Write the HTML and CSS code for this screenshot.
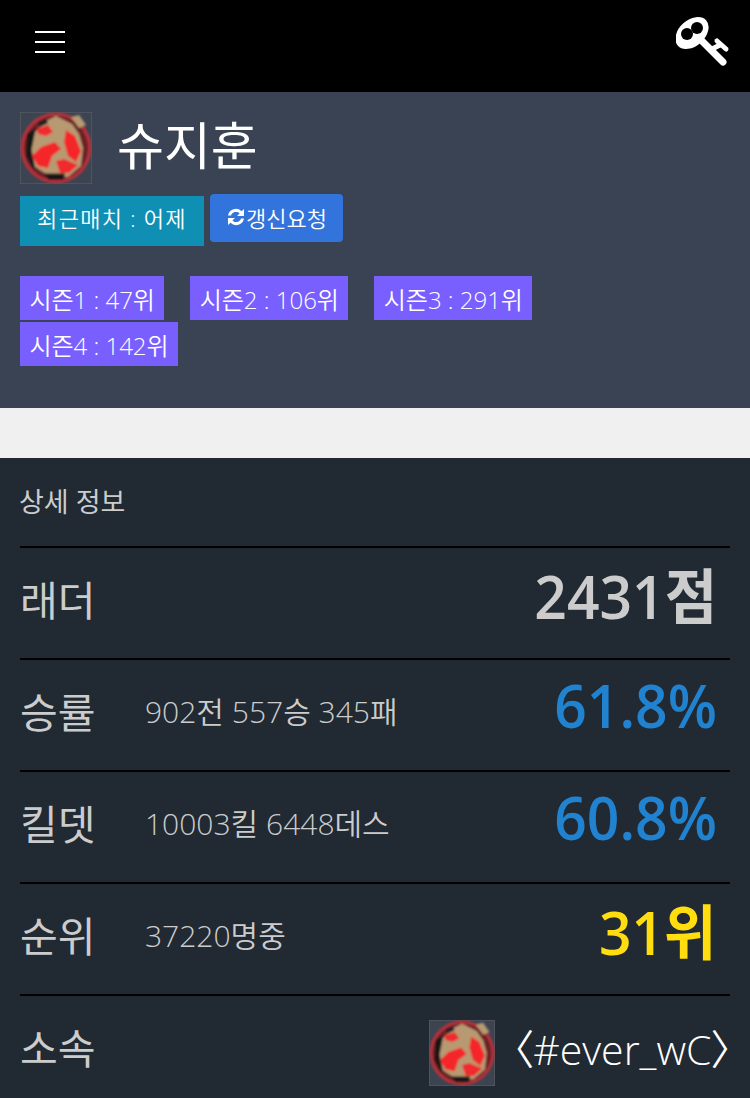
FILE: index.html
```html
<!DOCTYPE html>
<html lang="ko">
<head>
    <meta charset="UTF-8">
    <meta name="viewport" content="width=device-width, initial-scale=1.0">
    <title>슈지훈</title>
    <link rel="stylesheet" href="styles.css">
</head>
<body>
    <svg class="defs" width="0" height="0">
        <defs>
            <filter id="soft" x="-10%" y="-10%" width="120%" height="120%"><feGaussianBlur stdDeviation="0.12"/></filter>
            <symbol id="emblem" viewBox="0 0 7.2 7.2">
                <rect width="7.2" height="7.2" fill="#535962"/>
                <rect x="0.08" y="0.08" width="7.04" height="7.04" fill="#3c4452"/>
                <g filter="url(#soft)">
                    <circle cx="3.6" cy="3.6" r="3.55" fill="#b8323a"/>
                    <circle cx="3.6" cy="3.6" r="3.22" fill="#6a2228"/>
                    <path d="M0.7 2.2 L1.6 1.6 L2 5.8 L1.3 5.6 L0.6 4.4 Z" fill="#141214"/>
                    <path d="M1.5 2 L1.15 3.8 L1.5 5.5 L2.8 6.3 L4.8 6.5 L6.1 5.4 L6.3 3.6 L5.9 2.2 L5.2 1.2 L3.6 0.4 L2.6 0.9 Z" fill="#b89a72"/>
                    <path d="M1.7 1.7 L2.8 1.3 L3.3 2 L2.6 2.4 L1.8 2.2 Z" fill="#f02a2e"/>
                    <path d="M4.6 1.8 L5.5 2.4 L6.1 3.9 L5.6 5 L4.8 4.4 L4.4 3 Z" fill="#f4282c"/>
                    <path d="M1.2 4.4 L2.1 3.5 L3.5 3 L4.1 3.7 L3.2 4.4 L2.8 5.6 L1.8 5.4 Z" fill="#f4282c"/>
                    <path d="M3.6 4.9 L4.4 4.7 L5.8 5.3 L4.9 6.1 L4 6.1 Z" fill="#f02a2e"/>
                    <path d="M2.4 6.15 L4.5 6.15 L4.3 6.8 L2.9 6.8 Z" fill="#141214"/>
                    <path d="M1.8 1 L2.6 0.7 L2.8 1.1 L2 1.5 Z" fill="#2a1c20"/>
                    <path d="M5.1 0.5 L5.9 0.3 L6.6 1.3 L5.9 1.6 Z" fill="#b89a72"/>
                </g>
            </symbol>
        </defs>
    </svg>

    <header class="topbar">
        <div class="menu-btn"><span></span><span></span><span></span></div>
        <svg class="key-icon" viewBox="0 0 56 56" width="56" height="56">
            <ellipse cx="16" cy="20" rx="19" ry="13" transform="rotate(-42 16 20)" fill="#fff"/>
            <circle cx="11" cy="21" r="6" fill="#000"/>
            <circle cx="21" cy="15" r="6" fill="#000"/>
            <path d="M23 25 L47 49" stroke="#fff" stroke-width="7" stroke-linecap="round" fill="none"/>
            <path d="M34 37 L44 32" stroke="#fff" stroke-width="5" fill="none"/>
            <path d="M41 28 L50 36" stroke="#fff" stroke-width="5" fill="none" stroke-linecap="round"/>
        </svg>
    </header>

    <section class="profile">
        <div class="profile-name">
            <svg class="emblem-sm"><use href="#emblem"/></svg>
            <h1>슈지훈</h1>
        </div>
        <div class="status-row">
            <span class="recent">최근매치 : 어제</span>
            <button class="refresh" type="button">
                <svg viewBox="0 0 20 20" width="20" height="20">
                    <path d="M2 8.5 A8 8 0 0 1 15.5 4.2 L18 2 V9 H11 L13.6 6.4 A5.2 5.2 0 0 0 5 8.5 Z" fill="#fff"/>
                    <path d="M18 11.5 A8 8 0 0 1 4.5 15.8 L2 18 V11 H9 L6.4 13.6 A5.2 5.2 0 0 0 15 11.5 Z" fill="#fff"/>
                </svg>갱신요청
            </button>
        </div>
        <div class="seasons">
            <span class="season">시즌1 : 47위</span>
            <span class="season">시즌2 : 106위</span>
            <span class="season">시즌3 : 291위</span>
            <span class="season">시즌4 : 142위</span>
        </div>
    </section>

    <section class="details">
        <div class="details-title">상세 정보</div>
        <div class="row">
            <div class="row-label">래더</div>
            <div class="row-value grey">2431점</div>
        </div>
        <div class="row">
            <div class="row-label">승률</div>
            <div class="row-sub">902전 557승 345패</div>
            <div class="row-value blue">61.8%</div>
        </div>
        <div class="row">
            <div class="row-label">킬뎃</div>
            <div class="row-sub">10003킬 6448데스</div>
            <div class="row-value blue">60.8%</div>
        </div>
        <div class="row">
            <div class="row-label">순위</div>
            <div class="row-sub">37220명중</div>
            <div class="row-value yellow">31위</div>
        </div>
        <div class="row">
            <div class="row-label">소속</div>
            <div class="clan">
                <svg class="emblem-sm clan-emblem"><use href="#emblem"/></svg>
                <span class="clan-name">〈#ever_wC〉</span>
            </div>
        </div>
    </section>
</body>
</html>
```

FILE: styles.css
```css
html, body {
    margin: 0;
    padding: 0;
}

body {
    font-family: "Open Sans", "Noto Sans CJK KR", sans-serif;
    background-color: #f0f0f0;
    height: 1098px;
    overflow: hidden;
}

.defs {
    display: block;
    height: 0;
}

.topbar {
    height: 92px;
    background-color: #000;
    display: flex;
    justify-content: space-between;
    padding: 0 18px 0 35px;
    box-sizing: border-box;
}

.menu-btn {
    width: 30px;
    padding-top: 31px;
}

.menu-btn span {
    display: block;
    height: 2px;
    background-color: #fff;
    margin-bottom: 8px;
}

.key-icon {
    margin-top: 13px;
}

.profile {
    height: 316px;
    box-sizing: border-box;
    background-color: #394354;
    padding: 20px 20px 0;
    color: #fff;
}

.profile-name {
    display: flex;
    align-items: center;
    height: 72px;
}

.emblem-sm {
    width: 72px;
    height: 72px;
}

h1 {
    margin: 0 0 6px 25px;
    font-size: 51px;
    font-weight: 400;
    line-height: 64px;
}

.status-row {
    display: flex;
    align-items: flex-start;
    margin-top: 10px;
}

.recent {
    background-color: #108fb4;
    margin-top: 2px;
    width: 184px;
    height: 50px;
    line-height: 44px;
    font-size: 22px;
    font-weight: 350;
    text-align: center;
    letter-spacing: 1.3px;
    white-space: nowrap;
}

.refresh {
    margin-left: 6px;
    width: 133px;
    height: 48px;
    background-color: #3273dc;
    border: none;
    border-radius: 4px;
    color: #fff;
    font-family: inherit;
    font-size: 22px;
    font-weight: 350;
    padding: 0 0 2px;
    display: flex;
    align-items: center;
    justify-content: center;
}

.seasons {
    margin-top: 30px;
    max-width: 560px;
    display: flex;
    flex-wrap: wrap;
    column-gap: 26px;
    row-gap: 2px;
}

.season {
    background-color: #7a5fff;
    height: 44px;
    line-height: 47px;
    padding: 0 9.4px;
    font-size: 24px;
    font-weight: 350;
    white-space: nowrap;
}

.details {
    margin-top: 50px;
    height: 640px;
    background-color: #212932;
    padding: 0 20px;
}

.details-title {
    height: 90px;
    line-height: 88px;
    font-size: 27px;
    color: #ccc;
    border-bottom: 2px solid #000;
    box-sizing: border-box;
    text-indent: -1px;
}

.row {
    height: 112px;
    box-sizing: border-box;
    border-bottom: 2px solid #000;
    display: flex;
    align-items: center;
    color: #ccc;
}

.row-label {
    width: 125px;
    font-size: 41px;
    padding-bottom: 10px;
    white-space: nowrap;
}

.row-sub {
    font-size: 30px;
    font-weight: 350;
    flex: 1;
    padding-bottom: 10px;
}

.row-value {
    margin-left: auto;
    padding-right: 14px;
    font-size: 60px;
    font-weight: 600;
    padding-bottom: 20px;
    transform: scaleX(0.95);
    transform-origin: 100% 50%;
}

.grey { color: #ccc; }
.blue { color: #2182d0; }
.yellow { color: #ffdd0f; }

.clan {
    margin-left: auto;
    margin-right: -2px;
    display: flex;
    align-items: center;
    font-size: 41px;
    font-weight: 350;
    color: #fff;
}

.clan-name {
    font-feature-settings: "palt";
    padding-bottom: 8px;
}

.clan-emblem {
    width: 66px;
    height: 66px;
    margin-right: 18px;
    margin-top: 4px;
}
```
